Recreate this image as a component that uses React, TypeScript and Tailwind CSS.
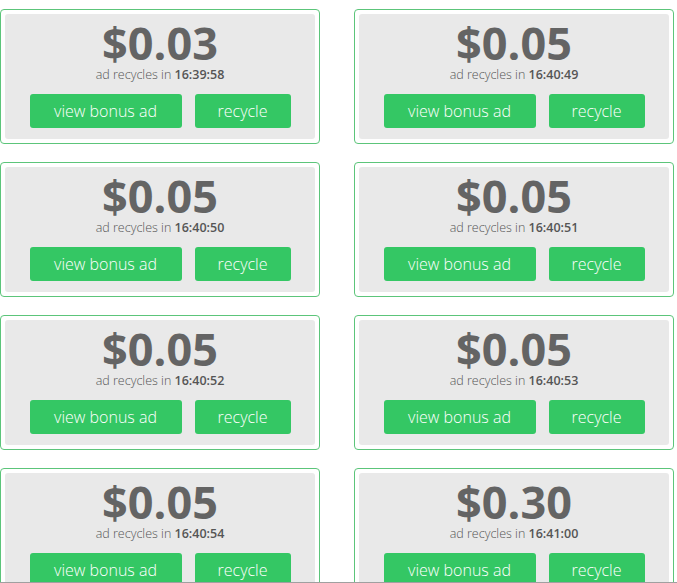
const ads = [
  { amount: "$0.03", time: "16:39:58" },
  { amount: "$0.05", time: "16:40:49" },
  { amount: "$0.05", time: "16:40:50" },
  { amount: "$0.05", time: "16:40:51" },
  { amount: "$0.05", time: "16:40:52" },
  { amount: "$0.05", time: "16:40:53" },
  { amount: "$0.05", time: "16:40:54" },
  { amount: "$0.30", time: "16:41:00" },
];

function AdCard({ amount, time }: { amount: string; time: string }) {
  return (
    <div className="rounded-[4px] border border-[#5cc57a] bg-white p-[4px]">
      <div className="flex h-[125px] flex-col items-center rounded-[3px] bg-[#e9e9e9] pt-[6px]">
        <p className="text-[45px] font-bold leading-[46px] text-[#646464]">{amount}</p>
        <p className="mt-[1px] text-[12.5px] font-light leading-[16px] text-[#555555]">
          ad recycles in <span className="font-semibold">{time}</span>
        </p>
        <div className="mt-[11px] flex gap-[13px]">
          <button className="h-[34px] w-[152px] rounded-[3px] bg-[#34c764] text-[16px] font-light text-white">
            view bonus ad
          </button>
          <button className="h-[34px] w-[96px] rounded-[3px] bg-[#34c764] text-[16px] font-light text-white">
            recycle
          </button>
        </div>
      </div>
    </div>
  );
}

export default function App() {
  return (
    <div className="min-h-[583px] bg-white font-['Open_Sans',sans-serif]">
      <div className="grid grid-cols-[320px_320px] gap-x-[34px] gap-y-[18px] pt-[9px]">
        {ads.map((ad, i) => (
          <AdCard key={i} amount={ad.amount} time={ad.time} />
        ))}
      </div>
      <div className="fixed bottom-0 left-0 h-px w-full bg-[#a0a0a0]" />
    </div>
  );
}
